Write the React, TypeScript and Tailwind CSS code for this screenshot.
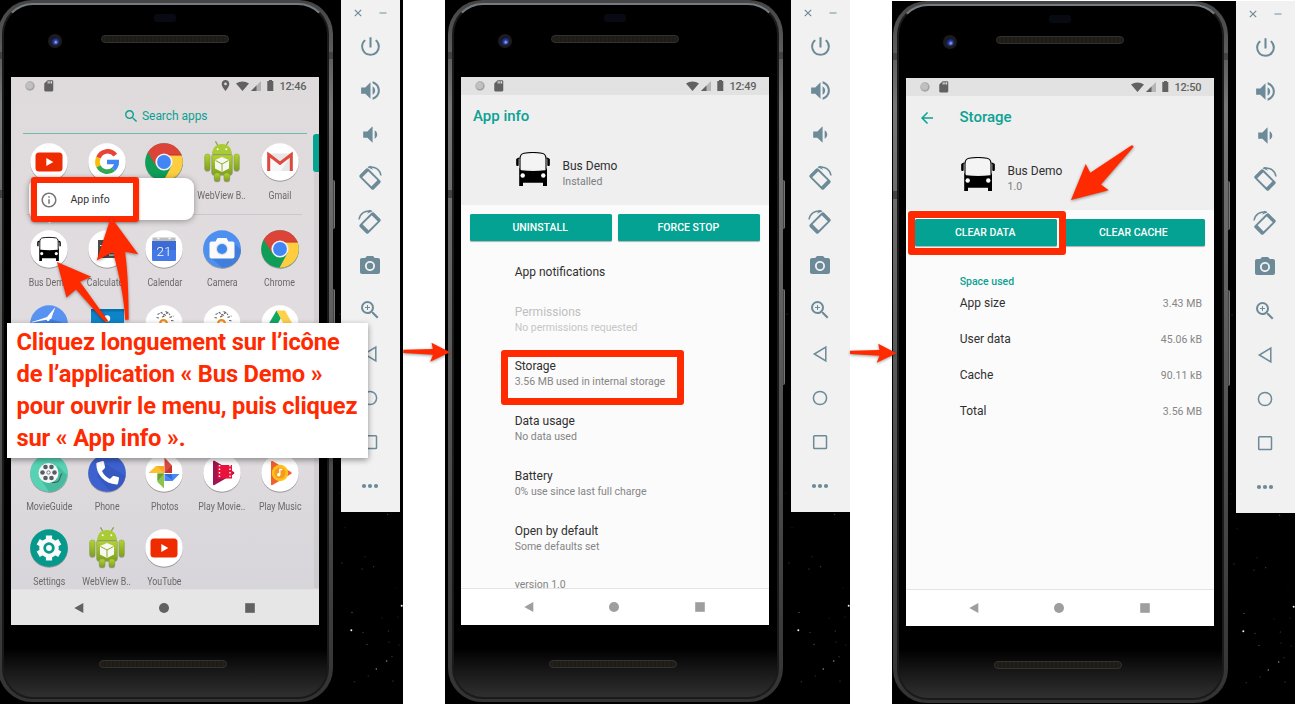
import React from "react";
import { MdPowerSettingsNew, MdVolumeUp, MdVolumeDown, MdPhotoCamera, MdZoomIn, MdSdCard, MdLocationOn, MdSearch, MdArrowBack, MdInfoOutline } from "react-icons/md";

/* ---------- icons ---------- */

function Bus({ size }: { size: number }) {
  return (
    <svg width={size} height={size} viewBox="0 0 34 34">
      <path d="M4 17.500V7C4 3.500 5.200 1.600 8 1.200c6-.9 12-.9 18 0 2.800.4 4 2.300 4 5.800v10.500" fill="#fff" fillOpacity=".35" stroke="#000" strokeWidth="1.100" />
      <path d="M3.700 6.200c-1.600-.2-2.400.5-2.400 2v4.500M30.300 6.200c1.600-.2 2.400.5 2.400 2v4.500" fill="none" stroke="#000" strokeWidth="1.100" />
      <rect x=".2" y="6.500" width="2.500" height="7.500" rx=".9" />
      <rect x="31.300" y="6.500" width="2.500" height="7.500" rx=".9" />
      <path d="M3.200 16l2 2.200c8 .9 16 .9 24 0l1.800-2.200V34H27v-3.300H7V34H3.200z" />
      <circle cx="6.700" cy="23.500" r="2.200" fill="#fff" />
      <circle cx="27.300" cy="23.500" r="2.200" fill="#fff" />
    </svg>
  );
}

function Disc({ fill = "#fff", children }: { fill?: string; children?: React.ReactNode }) {
  return (
    <svg width="38" height="38" viewBox="0 0 38 38" className="block overflow-visible drop-shadow-[0_1px_0.5px_rgba(0,0,0,0.3)]">
      <circle cx="19" cy="19" r="18.800" fill={fill} />
      {children}
    </svg>
  );
}

const YouTube = () => (
  <Disc>
    <rect x="5.500" y="9.500" width="27" height="19" rx="3.500" fill="#ee2c00" />
    <path d="M16.300 15v8l7-4z" fill="#fff" />
  </Disc>
);
const Google = () => (
  <Disc>
    <g fill="none" strokeWidth="4.600">
      <path d="M27.300 12.200A9.700 9.700 0 0 0 10.400 14.700" stroke="#ea4335" />
      <path d="M10.400 14.700a9.700 9.700 0 0 0 0 8.600" stroke="#fbbc05" />
      <path d="M10.400 23.300A9.700 9.700 0 0 0 25.500 26.200" stroke="#34a853" />
      <path d="M25.500 26.200A9.700 9.700 0 0 0 28.700 19H19" stroke="#4285f4" />
    </g>
  </Disc>
);
const Chrome = () => (
  <Disc fill="#0f9d58">
    <path d="M2.700 9.600A18.800 18.800 0 0 1 35.300 9.600L37 14H19L11.500 23.500z" fill="#db4437" />
    <path d="M36.600 12.500A18.800 18.800 0 0 1 18.500 37.800L26.500 23 24 12.500z" fill="#ffcd40" />
    <path d="M19 11.800h17.700" stroke="#c53929" strokeWidth=".8" />
    <circle cx="19" cy="19" r="8.600" fill="#f1f1f1" />
    <circle cx="19" cy="19" r="6.900" fill="#4285f4" />
  </Disc>
);
const Android = () => (
  <svg width="38" height="42" viewBox="0 0 38 42" className="-mt-[3px] block overflow-visible drop-shadow-[0_1px_0.5px_rgba(0,0,0,0.3)]">
    <defs>
      <linearGradient id="droid" x1="0" y1="0" x2="0" y2="1">
        <stop offset="0" stopColor="#b3d335" />
        <stop offset="1" stopColor="#7fa020" />
      </linearGradient>
    </defs>
    <path d="M12.500 1l3 5M25.500 1l-3 5" stroke="#8aab2a" strokeWidth="1" />
    <path d="M9.300 14c0-6.500 4.200-10 9.700-10s9.700 3.500 9.700 10z" fill="#a9cb33" />
    <circle cx="14.700" cy="9.200" r="1" fill="#fff" />
    <circle cx="23.300" cy="9.200" r="1" fill="#fff" />
    <g fill="url(#droid)" stroke="#7c9a22" strokeWidth=".4">
      <path d="M8.800 15h20.400v17.500a2 2 0 0 1-2 2H10.800a2 2 0 0 1-2-2z" />
      <rect x="1.800" y="14" width="5.200" height="16.500" rx="2" />
      <rect x="31" y="14" width="5.200" height="16.500" rx="2" />
      <rect x="11.300" y="33" width="5.700" height="8" rx="2" />
      <rect x="21" y="33" width="5.700" height="8" rx="2" />
    </g>
    <path d="M19 17l7 3v8.500l-7 3.500-7-3.500V20z" fill="#f7f7f2" />
    <path d="M12.500 20.500L19 24l6.500-3.500M19 24v7.500" fill="none" stroke="#8cab2b" strokeWidth="1" />
  </svg>
);
const Gmail = () => (
  <Disc>
    <path d="M6.300 10.500h25.400v17.500H6.300z" fill="#e7e7e9" />
    <path d="M9 13.500L19 21l10-7.500L20 28H9z" fill="#f6f6f6" />
    <path d="M7.700 28V11.500L19 20.300l11.300-8.800V28" fill="none" stroke="#dd4b3e" strokeWidth="3" />
  </Disc>
);
const BusApp = () => (
  <Disc>
    <svg x="7" y="7" width="24" height="24" viewBox="0 0 34 34" overflow="visible">
      <path d="M4 17.500V7C4 3.500 5.200 1.600 8 1.200c6-.9 12-.9 18 0 2.800.4 4 2.300 4 5.800v10.500" fill="#fff" stroke="#000" strokeWidth="1.300" />
      <path d="M3.700 6.200c-1.600-.2-2.400.5-2.400 2v5M30.300 6.200c1.600-.2 2.400.5 2.400 2v5" fill="none" stroke="#000" strokeWidth="2" />
      <path d="M3.200 16l2 2.200c8 .9 16 .9 24 0l1.800-2.200V34H27v-3.800H7V34H3.200z" />
      <circle cx="6.700" cy="23.500" r="2.200" fill="#fff" />
      <circle cx="27.300" cy="23.500" r="2.200" fill="#fff" />
    </svg>
  </Disc>
);
const Calculator = () => (
  <Disc>
    <path d="M10 10h18v18H10z" fill="#4d4d4d" />
    <path d="M12 15.500h6M23 12v6M12 23h6M21 22h5M21 25h5" stroke="#fff" strokeWidth="1" />
  </Disc>
);
const Calendar = () => (
  <Disc>
    <path d="M7.500 7.500h23v5h-23z" fill="#bdbdbd" />
    <path d="M12.500 8.500h2M23.500 8.500h2" stroke="#fff" strokeWidth="1.500" />
    <path d="M7 11h24v18.500a1.500 1.500 0 0 1-1.500 1.500h-21A1.500 1.500 0 0 1 7 29.500z" fill="#4579e8" />
    <path d="M7 11h24v9H7z" fill="#3b6bd3" />
    <text x="19" y="25.500" textAnchor="middle" fontSize="13.500" fontFamily="Roboto, sans-serif" fontWeight="300" fill="#fff">21</text>
  </Disc>
);
const Camera = () => (
  <Disc fill="#4d90f0">
    <path d="M31 13l7 7a18.800 18.800 0 0 1-19 17.800L8 27.500z" fill="#3c78d4" fillOpacity=".75" />
    <path d="M8.500 11.500h4l2-3.500h9l2 3.500h4a2 2 0 0 1 2 2v13a2 2 0 0 1-2 2h-21a2 2 0 0 1-2-2v-13a2 2 0 0 1 2-2z" fill="#fafafa" />
    <circle cx="19" cy="19" r="6.200" fill="#dfe3e8" />
    <circle cx="19" cy="19" r="5" fill="#3f86ee" />
  </Disc>
);
const Clock = () => (
  <Disc fill="#5893f2">
    <path d="M19.500 19L25 2.500l-8 9.500L1 17.500z" fill="#fff" />
    <path d="M20 14L3 19h34z" fill="#3f7de0" />
    <path d="M1 17l16.500-4L25.500 2.500l-6.500 13.500z" fill="#fff" />
    <path d="M1.500 17.500l15-2.800 1 1.500-4 2.800z" fill="#4a86e8" />
  </Disc>
);
const Contacts = () => (
  <svg width="38" height="38" viewBox="0 0 38 38" className="block">
    <path d="M3 4h33v30H3z" fill="#0d84c8" />
    <path d="M3 4h33v2.500H3z" fill="#0570b0" />
    <circle cx="19" cy="13.500" r="3.200" fill="#fff" />
    <path d="M11 26c0-10 16-10 16 0z" fill="#fff" />
  </svg>
);
const DevTool = () => (
  <Disc>
    <path d="M12.500 9.500l4-2 2.500 2.500 4-2.500 2 2.500M11.500 12.500l3.500.8M24.500 12.500l4-1.500M17 12l4-1.500M26 15.500l3 .3M22.500 7.500l-2-1" stroke="#666" strokeWidth="1.100" fill="none" strokeDasharray="2.500 1" />
    <circle cx="18.500" cy="18.500" r="3.400" fill="none" stroke="#ef8b1c" strokeWidth="2.200" />
    <path d="M15.500 25l2.500-6 3.500 6z" fill="#555" />
  </Disc>
);
const Drive = () => (
  <Disc>
    <path d="M15.500 5.500L5 23.500l4.500 7L20 13z" fill="#11a861" />
    <path d="M15.500 5.500H24L34 23.500H25z" fill="#ffd04b" />
    <path d="M12 25h22l-4.500 6H9z" fill="#4688f4" />
  </Disc>
);
const MovieGuide = () => (
  <Disc fill="#57d3b4">
    <path d="M28 12l9 9a18.800 18.800 0 0 1-18 16.800L12 27z" fill="#47bb9e" />
    <circle cx="18.500" cy="19" r="10" fill="#f7f7f5" />
    <g fill="#555e68">
      <circle cx="15.500" cy="13" r="2.300" /><circle cx="21.500" cy="13" r="2.300" />
      <circle cx="12.500" cy="18.500" r="2.300" /><circle cx="24.500" cy="18.500" r="2.300" />
      <circle cx="15.500" cy="24" r="2.300" /><circle cx="21.500" cy="24" r="2.300" />
    </g>
    <circle cx="18.500" cy="18.500" r="1.700" fill="none" stroke="#555e68" strokeWidth=".8" />
    <path d="M22 28.500c7 0 7.500-1.500 8.500-6.500l1.500-2.500" fill="none" stroke="#4b5a60" strokeWidth="1.100" />
  </Disc>
);
const Phone = () => (
  <Disc fill="#3d62d0">
    <path d="M16 9l21.500 13A18.800 18.800 0 0 1 22 37.600L9 22z" fill="#3153b8" fillOpacity=".6" />
    <path d="M9.500 8.500l5-1.500c.8-.2 1.300.2 1.500 1l1 5c0 .6 0 1-.5 1.500l-2.500 2.500c2 4 4 6 8 8l2.500-2.500c.5-.5 1-.6 1.500-.5l4 .9c.8.200 1.200.7 1 1.500l-1 5c-.2.800-.6 1.100-1.500 1C16.500 29.500 8.500 21 8.300 10c0-.9.4-1.300 1.200-1.500z" fill="#fff" />
  </Disc>
);
const Photos = () => (
  <Disc>
    <path d="M19.500 3.500v15.500h7.500l-.5-8z" fill="#dd4b3e" />
    <path d="M34.500 20H19.500v7h8z" fill="#4688f4" />
    <path d="M19 34.500V19.500H12.500V28z" fill="#8cc34a" />
    <path d="M3.500 19h15.500V12h-8z" fill="#fbc02d" />
    <path d="M12 12h7v7z" fill="#f9a825" />
    <path d="M19.500 19h7.500v-8z" fill="#c5372c" /><path d="M19.500 20h7l1 6z" fill="#3367d6" /><path d="M19 19.500l-6.500 7.500v-7.500z" fill="#689f38" />
  </Disc>
);
const PlayMovies = () => (
  <Disc>
    <path d="M10 7.500c0-1 1-1 1.500-.7L30.500 18c1 .6 1 1.500 0 2L11.500 31c-.8.500-1.500.2-1.500-.7z" fill="#a0144f" />
    <path d="M14.500 11H29v13.500H14.500z" fill="#e8123c" />
    <path d="M29 11v6l1.500 1c1 .6 1 1.400 0 2L29 21v3.500z" fill="#c9103c" />
    <path d="M16.500 11v13.500M27 11v13.500" stroke="#fff" strokeWidth="1.400" strokeDasharray="1.500 2" />
  </Disc>
);
const PlayMusic = () => (
  <Disc>
    <path d="M10 8c0-1 1-1.200 1.500-.9L30 18c1 .6 1 1.500 0 2L11.500 31c-.8.500-1.500.2-1.500-.7z" fill="#f4602b" />
    <circle cx="19" cy="19" r="8.200" fill="#fcc21b" />
    <circle cx="19" cy="19" r="5.600" fill="#f89a1c" />
    <circle cx="17.700" cy="20.800" r="1.700" fill="#fff" />
    <path d="M18.800 21v-5.500h2.500" stroke="#fff" strokeWidth="1.300" fill="none" />
  </Disc>
);
const Settings = () => (
  <Disc fill="#04998b">
    <circle cx="19" cy="19" r="9.800" fill="#fafafa" />
    <g stroke="#fafafa" strokeWidth="6.200">
      <path d="M19 6.500v25M8.200 12.700l21.600 12.600M8.200 25.300l21.600-12.600" />
    </g>
    <circle cx="19" cy="19" r="5.700" fill="#04998b" />
    <circle cx="19" cy="19" r="2.900" fill="#fafafa" />
  </Disc>
);

function RotateIcon({ mirrored = false }: { mirrored?: boolean }) {
  return (
    <svg width="26" height="26" viewBox="-13 -13 26 26" className={mirrored ? "block -scale-x-100" : "block"}>
      <g transform="translate(0 1) rotate(45)" fill="none" stroke="#6c8a98">
        <rect x="-9" y="-5.200" width="18" height="10.400" rx=".8" strokeWidth="1.900" />
        <path d="M-8.200 -5v10M7.800 -5v10" strokeWidth="3.200" />
      </g>
      <path d="M-1.500 -10.800C5 -12.200 10 -8.500 11 -2.500" fill="none" stroke="#6c8a98" strokeWidth="1.500" />
      <path d="M-2.500 -10.800l3 -1.500 2.500 4z" fill="#6c8a98" />
    </svg>
  );
}

/* ---------- emulator chrome ---------- */

function Toolbar() {
  const tools = [
    <MdPowerSettingsNew size={25} />,
    <MdVolumeUp size={25} />,
    <MdVolumeDown size={25} />,
    <RotateIcon />,
    <RotateIcon mirrored />,
    <MdPhotoCamera size={24} />,
    <MdZoomIn size={24} />,
    <svg width="20" height="20" viewBox="0 0 20 20" fill="none" stroke="#6c8a98" strokeWidth="1.500"><path d="M15.800 3v14L4.300 10z" /></svg>,
    <svg width="20" height="20" viewBox="0 0 20 20" fill="none" stroke="#6c8a98" strokeWidth="1.500"><circle cx="10" cy="10" r="6.600" /></svg>,
    <svg width="20" height="20" viewBox="0 0 20 20" fill="none" stroke="#6c8a98" strokeWidth="1.500"><rect x="3.700" y="3.700" width="12.800" height="12.800" rx=".8" /></svg>,
    <svg width="20" height="20" viewBox="0 0 20 20" fill="#6c8a98"><circle cx="4" cy="10" r="2.100" /><circle cx="10" cy="10" r="2.100" /><circle cx="16" cy="10" r="2.100" /></svg>,
  ];
  return (
    <div className="flex h-[512px] w-[59px] shrink-0 flex-col bg-[#f1f1f1] text-[#6c8a98]">
      <div className="flex h-6 items-center justify-between px-[13px] pt-[2px]">
        <svg width="8" height="8" viewBox="0 0 8 8"><path d="M.8 .8l6.400 6.400M7.200 .8L.8 7.200" stroke="#6c8a98" strokeWidth="1.200" /></svg>
        <svg width="8" height="8" viewBox="0 0 8 8"><path d="M.5 4h7" stroke="#9db1bb" strokeWidth="1.500" /></svg>
      </div>
      {tools.map((t, i) => (
        <div key={i} className="flex h-11 w-[58px] shrink-0 items-center justify-center">{t}</div>
      ))}
    </div>
  );
}

const STARS: [number, number, number, string][] = [
  [345, 527.7, 0.5, "#334"], [387.7, 514.3, 0.6, "#60408a"], [342, 563, 0.6, "#555"], [352, 612.3, 0.6, "#777"],
  [351.3, 630.3, 1, "#eee"], [363, 632.3, 0.6, "#555"], [386.7, 661, 0.8, "#888"], [376.3, 669, 0.7, "#999"],
  [367, 644.3, 0.6, "#666"], [401.7, 605.7, 1, "#eee"], [388.3, 631, 0.6, "#555"], [354.3, 681.7, 0.6, "#435"],
  [368.3, 676, 0.6, "#444"], [392, 656.7, 0.6, "#444"], [365, 556.7, 0.5, "#444"], [373.7, 566.7, 0.6, "#446"],
  [362, 569, 0.6, "#555"], [389, 642, 0.5, "#555"], [393, 681, 0.6, "#555"], [340, 314, 0.5, "#555"],
  [339, 493, 0.4, "#444"], [382, 618, 0.5, "#425"], [398, 617, 0.5, "#444"], [399, 645, 0.5, "#444"], [396, 588, 0.4, "#333"],
];

function Grille() {
  return <div className="h-[8px] w-[128px] rounded-full border border-[#33322f] bg-[repeating-linear-gradient(90deg,#1d1b16_0px,#1d1b16_2px,#26231e_3px,#1d1b16_4px)]" />;
}

function Device({ className, children }: { className: string; children: React.ReactNode }) {
  return (
    <section className={`relative flex shrink-0 overflow-hidden bg-black ${className}`}>
      <div className="relative w-[341px] shrink-0">
        <div className="absolute top-[180px] left-[331px] h-[49px] w-[4px] rounded-r-[2px] border-r border-[#777] bg-[#444]" />
        <div className="absolute top-[289px] left-[331px] h-[96px] w-[4px] rounded-r-[2px] border-r border-[#777] bg-[#444]" />
        <div className="absolute top-0 -left-[2.5px] h-[702px] w-[335px] rounded-[34px] bg-linear-to-b from-[#444] via-[#777] via-15% to-[#333] p-[3px] px-[4px]">
          <div className="h-full w-full rounded-[31px] border-2 border-[#1a1a1a] border-t-[#747c81] bg-[linear-gradient(180deg,#000_0%,#000_93%,#161616_96%,#303030_100%)]" />
          <div className="absolute top-[52px] left-0 h-[7px] w-[4px] bg-[#444]" />
          <div className="absolute top-[52px] right-0 h-[7px] w-[4px] bg-[#444]" />
          <div className="absolute top-[190px] left-0 h-[8px] w-[4px] bg-[#444]" />
        </div>
        <div className="relative flex h-[77px] pt-[35px] pl-[48px]">
          <div className="-mt-px flex h-[14px] w-[14px] items-center justify-center rounded-full bg-[#1c1c20]">
            <div className="h-[8px] w-[8px] rounded-full bg-[radial-gradient(circle_at_60%_65%,#a9b8ff_0%,#2a3f9c_30%,#0a0f2c_75%)]" />
          </div>
          <div className="ml-[39px]"><Grille /></div>
          <div className="absolute top-[14px] left-[154px] h-[8px] w-[22px] rounded-[3px] bg-[#070a12]" />
        </div>
        <div className="relative ml-[11px] flex h-[548px] w-[308px] flex-col overflow-hidden">{children}</div>
        <div className="relative flex h-[79px] pt-[35px] pl-[99px]"><Grille /></div>
      </div>
      <Toolbar />
      <svg className="pointer-events-none absolute top-0 right-0 h-[704px] w-[403px]" viewBox="0 0 403 704">
        {STARS.map(([x, y, r, c], i) => <circle key={i} cx={x} cy={y} r={r} fill={c} />)}
      </svg>
    </section>
  );
}

function StatusBar({ time, location = false, className = "" }: { time: string; location?: boolean; className?: string }) {
  return (
    <div className={`flex h-[17.500px] shrink-0 items-center pr-[12px] pl-[14px] text-[#616161] ${className}`}>
      <svg width="10" height="10" viewBox="0 0 10 10"><circle cx="5" cy="5" r="4.700" fill="#a5a5a5" /><circle cx="4.500" cy="4.500" r="3.600" fill="#c0c0c0" /></svg>
      <MdSdCard size={13.5} className="ml-[6.500px]" />
      <div className="ml-auto flex items-center">
        {location && <MdLocationOn size={13} className="mr-[4px]" />}
        <svg width="13" height="10" viewBox="0 0 13 10"><path d="M0 2.500C4-.3 9-.3 13 2.500L6.500 10z" fill="currentColor" /></svg>
        <svg width="10" height="10" viewBox="0 0 10 10" className="ml-[2px]"><path d="M10 0v10H0z" fill="currentColor" fillOpacity=".35" /><path d="M5.500 4.500V10H0z" fill="currentColor" /></svg>
        <svg width="7" height="11" viewBox="0 0 7 11" className="ml-[6px]"><path d="M2 0h3v1h1.300v10H.3V1H2z" fill="currentColor" /></svg>
        <span className="ml-[5.500px] w-[27.500px] pt-px text-[11px] leading-none font-medium tracking-[-0.200px] whitespace-nowrap">{time}</span>
      </div>
    </div>
  );
}

function NavBar({ className }: { className: string }) {
  return (
    <div className={`mt-auto flex h-[37px] shrink-0 items-center justify-between border-t pr-[64.500px] pb-px pl-[63px] ${className}`}>
      <svg width="10" height="10" viewBox="0 0 10 10" fill="currentColor"><path d="M9.300 0v10L.3 5z" /></svg>
      <svg width="10" height="10" viewBox="0 0 10 10" fill="currentColor"><circle cx="5" cy="5" r="5" /></svg>
      <svg width="10" height="10" viewBox="0 0 10 10" fill="currentColor"><rect x=".2" y=".2" width="9.600" height="9.600" /></svg>
    </div>
  );
}

/* ---------- launcher ---------- */

type App = [string, () => React.JSX.Element];

function AppRow({ apps, className }: { apps: App[]; className: string }) {
  return (
    <div className={`flex shrink-0 pl-[9.200px] ${className}`}>
      {apps.map(([name, Icon], i) => (
        <div key={i} className="flex w-[57.700px] flex-col items-center">
          <div className="h-[38px]"><Icon /></div>
          <span className="mt-[9px] origin-center scale-x-88 text-[10px] leading-[12px] whitespace-nowrap text-[#6b686a]">{name}</span>
        </div>
      ))}
    </div>
  );
}

function Launcher() {
  return (
    <div className="flex h-full flex-col bg-linear-to-b from-[#dfdbdd] via-[#e2dde0] via-60% to-[#d5d4d9]">
      <StatusBar time="12:46" location />
      <div className="ml-[12px] flex h-[38.500px] w-[284px] shrink-0 items-center justify-center pt-[4.500px] text-[12px] text-[#0da192]">
        <MdSearch size={16.5} className="mr-[3px]" />
        <span className="tracking-[-0.050px]">Search apps</span>
      </div>
      <div className="ml-[12px] h-px w-[284px] shrink-0 bg-[#6fbab0]" />
      <AppRow className="mt-[8.500px] h-[71px]" apps={[["", YouTube], ["", Google], ["Chrome", Chrome], ["WebView B..", Android], ["Gmail", Gmail]]} />
      <div className="ml-[16px] h-px w-[275px] shrink-0 bg-[#cac6c9]" />
      <AppRow className="mt-[15.500px] h-[75px]" apps={[["Bus Demo", BusApp], ["Calculator", Calculator], ["Calendar", Calendar], ["Camera", Camera], ["Chrome", Chrome]]} />
      <AppRow className="h-[75px]" apps={[["", Clock], ["", Contacts], ["", DevTool], ["", DevTool], ["", Drive]]} />
      <AppRow className="mt-[74px] h-[75px]" apps={[["MovieGuide", MovieGuide], ["Phone", Phone], ["Photos", Photos], ["Play Movie..", PlayMovies], ["Play Music", PlayMusic]]} />
      <AppRow className="h-[60px]" apps={[["Settings", Settings], ["WebView B..", Android], ["YouTube", YouTube]]} />
      <NavBar className="border-[#e0e0e2] bg-[#e6e6e6] text-[#616161]" />
      <div className="absolute top-[57px] right-0 h-[454px] w-[5px] bg-black/5" />
      <div className="absolute top-[57px] right-0 h-[38px] w-[6px] rounded-l-[3px] bg-[#04a392]" />
      <div className="absolute top-[101px] left-[18px] flex h-[42px] w-[164.500px] items-center rounded-[9px] bg-white pt-px pl-[11px] text-[#333] shadow-[0_1px_6px_rgba(0,0,0,0.35)]">
        <MdInfoOutline size={18} className="text-[#757575]" />
        <span className="ml-[12.500px] pt-px text-[10.500px]">App info</span>
      </div>
      <svg className="absolute top-[143px] left-[35px]" width="7" height="4"><path d="M0 0h7L3.500 3.500z" fill="#fff" /></svg>
    </div>
  );
}

/* ---------- settings screens ---------- */

function AppHeader({ subtitle, className }: { subtitle: string; className: string }) {
  return (
    <div className={`flex items-start pl-[54.500px] ${className}`}>
      <Bus size={34} />
      <div className="ml-[13px] pt-[7px]">
        <div className="text-[12px] leading-[15px] text-[#303030]">Bus Demo</div>
        <div className="text-[10.500px] leading-[15px] text-[#7d7d7d]">{subtitle}</div>
      </div>
    </div>
  );
}

function Buttons({ labels }: { labels: string[] }) {
  return (
    <div className="flex shrink-0 gap-[5.700px] px-[8.700px] pt-[9px]">
      {labels.map((l) => (
        <button key={l} className="h-[27px] flex-1 rounded-[1.500px] bg-[#04a292] pt-[1.500px] pr-[1.500px] text-[10.500px] font-medium text-white shadow-[0_1px_1px_rgba(0,0,0,0.3)]">{l}</button>
      ))}
    </div>
  );
}

function Entry({ title, note, disabled = false }: { title: string; note: string; disabled?: boolean }) {
  return (
    <div className="h-[54.800px] shrink-0 pt-[12.500px]">
      <div className={`text-[12px] leading-[15px] ${disabled ? "text-[#bfbfbf]" : "text-[#303030]"}`}>{title}</div>
      <div className={`text-[10.500px] leading-[15px] ${disabled ? "text-[#c6c6c6]" : "text-[#858585]"}`}>{note}</div>
    </div>
  );
}

function AppInfo() {
  return (
    <div className="flex h-full flex-col bg-[#fbfbfb]">
      <StatusBar time="12:49" className="bg-[#e2e2e2]" />
      <div className="h-[110.500px] shrink-0 bg-[#efefef]">
        <div className="flex h-[44px] items-center pl-[12px] text-[15px] font-medium text-[#0ba293]">App info</div>
        <AppHeader subtitle="Installed" className="mt-[13px]" />
      </div>
      <Buttons labels={["UNINSTALL", "FORCE STOP"]} />
      <div className="flex h-[347px] flex-col overflow-hidden pt-[11px] pl-[53.700px]">
        <div className="flex h-[40px] shrink-0 items-center text-[12px] text-[#303030]">App notifications</div>
        <Entry title="Permissions" note="No permissions requested" disabled />
        <Entry title="Storage" note="3.56 MB used in internal storage" />
        <Entry title="Data usage" note="No data used" />
        <Entry title="Battery" note="0% use since last full charge" />
        <Entry title="Open by default" note="Some defaults set" />
        <div className="pt-[11px] text-[10.500px] leading-[15px] text-[#858585]">version 1.0</div>
      </div>
      <NavBar className="border-[#e4e4e4] bg-white text-[#9e9e9e]" />
    </div>
  );
}

function Storage() {
  const rows = [["App size", "3.43 MB"], ["User data", "45.06 kB"], ["Cache", "90.11 kB"], ["Total", "3.56 MB"]];
  return (
    <div className="flex h-full flex-col bg-[#fbfbfb]">
      <StatusBar time="12:50" className="bg-[#e2e2e2]" />
      <div className="h-[114.500px] shrink-0 bg-[#efefef]">
        <div className="flex h-[44px] items-center pl-[12px] text-[15px] font-medium text-[#0ba293]">
          <MdArrowBack size={18} /><span className="ml-[23.500px]">Storage</span>
        </div>
        <AppHeader subtitle="1.0" className="mt-[17px]" />
      </div>
      <Buttons labels={["CLEAR DATA", "CLEAR CACHE"]} />
      <div className="flex flex-col pt-[29px] pr-[12px] pl-[53.700px]">
        <div className="text-[10.500px] leading-[14px] font-medium text-[#0ba293]">Space used</div>
        {rows.map(([k, v]) => (
          <div key={k} className="flex h-[36px] items-start justify-between text-[12px] leading-[29px] text-[#303030]">
            <span>{k}</span><span className="text-[10.500px] tracking-[0.050px] text-[#858585]">{v}</span>
          </div>
        ))}
      </div>
      <NavBar className="border-[#e4e4e4] bg-white text-[#9e9e9e]" />
    </div>
  );
}

export default function App() {
  return (
    <main className="relative flex h-[704px] w-[1295px] items-start justify-between overflow-hidden bg-white font-[Roboto,sans-serif]">
      <Device className="h-[704px] w-[403px]"><Launcher /></Device>
      <Device className="h-[704px] w-[405px] pl-[5px]"><AppInfo /></Device>
      <Device className="mt-px h-[703px] w-[403px] pl-[3px]"><Storage /></Device>

      <div className="absolute top-[177px] left-[30.500px] h-[44.500px] w-[108.500px] rounded-[3px] border-[6.500px] border-[#ff2a00] shadow-[0_1px_3px_rgba(0,0,0,0.35)]" />
      <div className="absolute top-[349.500px] left-[501px] h-[55.500px] w-[183px] rounded-[3px] border-[7px] border-[#ff2a00]" />
      <div className="absolute top-[211px] left-[908px] h-[44px] w-[158px] rounded-[3px] border-[7px] border-[#ff2a00]" />
      <svg className="absolute top-0 left-0 drop-shadow-[0_1px_1.500px_rgba(0,0,0,0.4)]" width="1295" height="704" viewBox="0 0 1295 704" fill="#ff2a00">
        <path d="M57 262l34.300 14.700-11.300 5 28.500 39.800-4 0L76 289.500l-9.500 8z" />
        <path d="M111 217l27.300 37.300-13.300-2.600c3 20 3.500 45 3.700 67.800l-3.400.5C124 297 119 274 113 252l-16.300 8.500z" />
        <path d="M1071 200l14.700-36 4.600 8.700 40.700-27c1.500-.8 3 .2 2.300 1.500L1101 184.500l7.700 5.800z" />
        <path d="M403.300 349.700l29.500-.8-1.300-6.200L450 352.200l-19.800 9.500 2.800-7-29.700-1.600z" />
        <path d="M850 350.700l29.500-.8-1.300-6.200L896.500 353.200l-19.800 9.500 2.800-7-29.500-1.600z" />
      </svg>
      <div className="absolute top-[323px] left-[7px] h-[135px] w-[361px] bg-white pt-[3px] pl-[9.500px] text-[23.700px] leading-[32px] font-bold tracking-[-0.170px] whitespace-nowrap text-[#ff2a00] shadow-[0_2px_6px_rgba(0,0,0,0.4)]">
        <p>Cliquez longuement sur l’icône</p>
        <p>de l’application « Bus Demo »</p>
        <p>pour ouvrir le menu, puis cliquez</p>
        <p>sur « App info ».</p>
      </div>
    </main>
  );
}
